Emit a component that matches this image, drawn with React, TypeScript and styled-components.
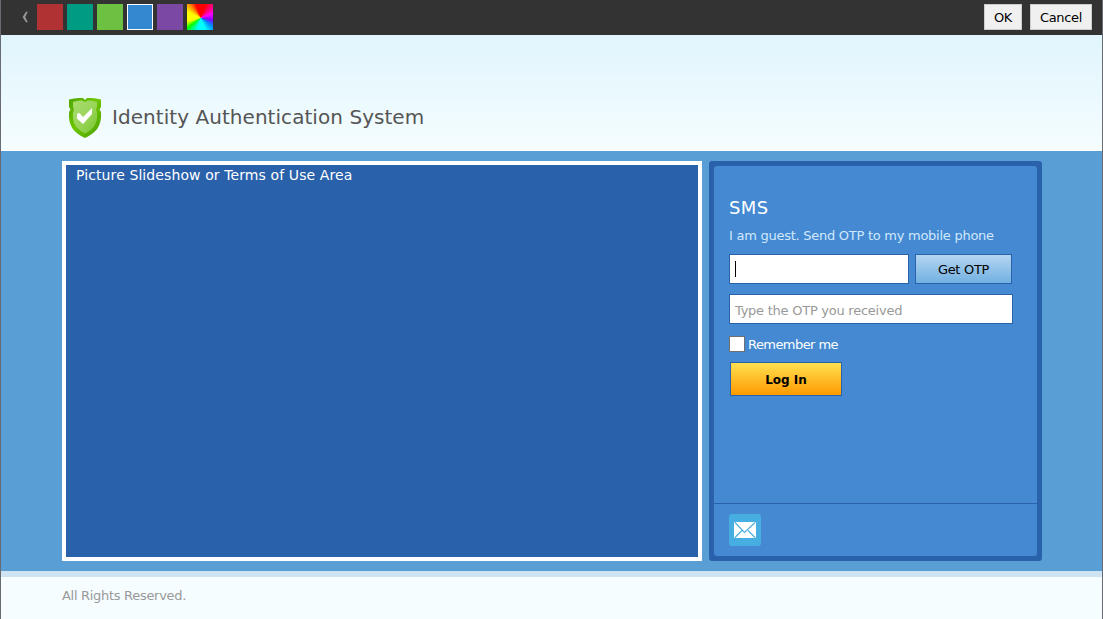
import React from 'react';
import styled, { createGlobalStyle } from 'styled-components';

const GlobalStyle = createGlobalStyle`
  * { box-sizing: border-box; }
  body { margin: 0; font-family: Verdana, "DejaVu Sans", sans-serif; font-size: 13px; color: #fff; overflow: hidden; }
  button, input { font-family: inherit; font-size: 13px; margin: 0; }
  h1, h2, p { margin: 0; font-weight: normal; }
`;

const Page = styled.div`
  display: flex;
  flex-direction: column;
  height: 619px;
  border-left: 1px solid #686c72;
  border-right: 1px solid #686c72;
  background: #f5fdff;
`;

const Toolbar = styled.div`
  display: flex;
  align-items: center;
  height: 35px;
  padding: 0 10px 1px 20px;
  background: #333;
`;

const BackArrow = styled.svg`
  display: block;
  margin-right: 8px;
`;

const Swatches = styled.div`
  display: flex;
  gap: 4px;
`;

const Swatch = styled.span<{ $fill: string; $active?: boolean }>`
  width: 26px;
  height: 26px;
  background: ${(p) => p.$fill};
  border: ${(p) => (p.$active ? '1px solid #fff' : 'none')};
`;

const ToolbarActions = styled.div`
  display: flex;
  gap: 8px;
  margin-left: auto;
`;

const ToolbarButton = styled.button<{ $width: number }>`
  width: ${(p) => p.$width}px;
  height: 26px;
  padding: 0;
  border: 1px solid #ccc;
  background: #f0f0f0;
  color: #000;
  letter-spacing: -0.3px;
`;

const Header = styled.header`
  display: flex;
  align-items: flex-start;
  height: 116px;
  padding: 62px 0 0 67px;
  background: linear-gradient(#e0f5fc, #f5fdff);
  border-bottom: 1px solid #fff;
`;

const Title = styled.h1`
  margin: 6px 0 0 10px;
  font-size: 20px;
  line-height: 28px;
  letter-spacing: 0.05px;
  color: #555;
  white-space: nowrap;
`;

const Main = styled.main`
  display: flex;
  gap: 7px;
  height: 420px;
  padding: 10px 60px 10px 61px;
  background: #5a9ed6;
`;

const Slideshow = styled.section`
  width: 640px;
  height: 400px;
  padding: 1px 10px;
  border: 4px solid #fff;
  background: #2a61ab;
  font-size: 14px;
  line-height: 18px;
  letter-spacing: 0.1px;
`;

const Panel = styled.section`
  width: 333px;
  height: 400px;
  padding: 5px;
  border-radius: 3px;
  background: #2a61ab;
`;

const PanelBody = styled.div`
  display: flex;
  flex-direction: column;
  height: 390px;
  border-radius: 3px;
  background: #4489d2;
`;

const Form = styled.form`
  height: 338px;
  padding: 30px 0 0 15px;
  border-bottom: 1px solid #2a61ab;
`;

const FormTitle = styled.h2`
  font-size: 18px;
  line-height: 24px;
  letter-spacing: 0.4px;
`;

const Hint = styled.p`
  margin-top: 7px;
  line-height: 18px;
  letter-spacing: -0.26px;
  color: #d0e8fc;
  white-space: nowrap;
`;

const PhoneRow = styled.div`
  display: flex;
  gap: 6px;
  margin: 9px 0 10px;
`;

const Field = styled.div<{ $width: number }>`
  display: flex;
  align-items: center;
  width: ${(p) => p.$width}px;
  height: 30px;
  padding: 2px 5px 0;
  border: 1px solid #2a61ab;
  background: #fff;
  color: #999;
  letter-spacing: -0.25px;
  white-space: nowrap;
`;

const Caret = styled.span`
  width: 1px;
  height: 16px;
  margin-top: -3px;
  background: #000;
`;

const OtpButton = styled.button`
  width: 97px;
  height: 30px;
  padding: 0;
  border: 1px solid #2a61ab;
  background: linear-gradient(#b4d5f0, #72b1e2);
  color: #000;
  letter-spacing: -0.3px;
`;

const Remember = styled.label`
  display: flex;
  align-items: center;
  gap: 3px;
  height: 16px;
  margin-top: 12px;
  letter-spacing: -0.56px;
`;

const Checkbox = styled.span`
  width: 16px;
  height: 16px;
  border: 1px solid #707070;
  background: #fff;
`;

const LoginButton = styled.button`
  display: block;
  width: 112px;
  height: 34px;
  margin: 10px 0 0 1px;
  padding: 2px 0 0;
  border: 1px solid #2a61ab;
  background: linear-gradient(#ffe050, #ff9a00);
  color: #000;
  font-size: 12px;
  font-weight: bold;
`;

const Methods = styled.div`
  padding: 10px 15px;
`;

const MailTile = styled.span`
  display: flex;
  align-items: center;
  justify-content: center;
  width: 32px;
  height: 32px;
  border-radius: 3px;
  background: #46aee1;
`;

const Footer = styled.footer`
  flex: 1;
  padding: 10px 61px;
  border-top: 6px solid #cfe4f3;
  background: #f5fdff;
  color: #999;
  line-height: 18px;
  letter-spacing: -0.3px;
`;

const swatches = ['#b13232', '#009b83', '#6cc042', '#3388d0', '#7b48a3'];
const wheel =
  'conic-gradient(from 0deg at 53% 53%, #f00, #f00 20deg, #f0f 70deg, #80f 100deg, #08f 125deg, #0ff 160deg, #0ff 195deg, #0f8 215deg, #0f0 232deg, #ff0 255deg, #ff0 295deg, #f80 320deg, #f00 340deg)';

const Shield = () => (
  <svg width="34" height="41" viewBox="0 0 34 41">
    <defs>
      <linearGradient id="rim" x1="0" y1="0" x2="1" y2="1">
        <stop offset="0" stopColor="#4ea600" />
        <stop offset=".45" stopColor="#6ec500" />
        <stop offset="1" stopColor="#49a100" />
      </linearGradient>
      <linearGradient id="face" x1="0" y1="0" x2="1" y2="1">
        <stop offset="0" stopColor="#a9dd6f" />
        <stop offset=".5" stopColor="#9ad55a" />
        <stop offset="1" stopColor="#76c62d" />
      </linearGradient>
    </defs>
    <path d="M1 2.5C6 1 11 1 15 1L17 3L19 1C24 1 28 1 33 2.5V10L31.5 12.5L33 15C34 29 28 36 17 41C6 36 0 29 1 15L2.5 12.5L1 10Z" fill="url(#rim)" />
    <path d="M5 5C9 3.7 12 3.5 14 3.5L17 5L20 3.5C22 3.5 25 3.7 29 5V10L28 12.5L29 15.5C30 26 26 32 17 36.5C8 32 4 26 5 15.5L6 12.5L5 10Z" fill="url(#face)" />
    <path d="M9 17L11.5 16L15 20L24 11V17L15 27L9 21.5Z" fill="#fff" />
  </svg>
);

const Mail = () => (
  <svg width="22" height="16" viewBox="0 0 22 16">
    <rect width="22" height="16" rx="1" fill="#fff" />
    <path d="M1 .5L10.5 10.5L21 .5M1 15.5L8 8.5M21 15.5L14 8.5" fill="none" stroke="#46aee1" strokeWidth="1.1" />
  </svg>
);

export default function App() {
  return (
    <Page>
      <GlobalStyle />
      <Toolbar>
        <BackArrow width="8" height="12" viewBox="0 0 8 12">
          <path d="M6.8 .7H5L1.6 6L5 11.3H6.8L4.2 6Z" fill="#999" />
        </BackArrow>
        <Swatches>
          {swatches.map((c, i) => (
            <Swatch key={c} $fill={c} $active={i === 3} />
          ))}
          <Swatch $fill={wheel} />
        </Swatches>
        <ToolbarActions>
          <ToolbarButton $width={38}>OK</ToolbarButton>
          <ToolbarButton $width={62}>Cancel</ToolbarButton>
        </ToolbarActions>
      </Toolbar>
      <Header>
        <Shield />
        <Title>Identity Authentication System</Title>
      </Header>
      <Main>
        <Slideshow>Picture Slideshow or Terms of Use Area</Slideshow>
        <Panel>
          <PanelBody>
            <Form>
              <FormTitle>SMS</FormTitle>
              <Hint>I am guest. Send OTP to my mobile phone</Hint>
              <PhoneRow>
                <Field $width={180}><Caret /></Field>
                <OtpButton type="button">Get OTP</OtpButton>
              </PhoneRow>
              <Field $width={284}>Type the OTP you received</Field>
              <Remember><Checkbox />Remember me</Remember>
              <LoginButton type="button">Log In</LoginButton>
            </Form>
            <Methods><MailTile><Mail /></MailTile></Methods>
          </PanelBody>
        </Panel>
      </Main>
      <Footer>All Rights Reserved.</Footer>
    </Page>
  );
}
